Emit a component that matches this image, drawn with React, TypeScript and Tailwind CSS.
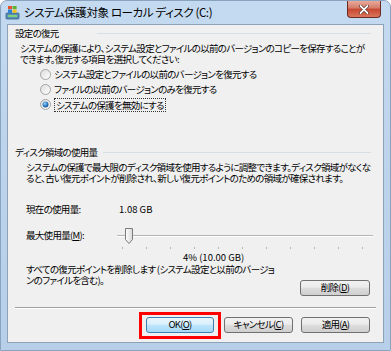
import React from "react";

const font = "font-['Noto_Sans_CJK_JP',sans-serif] [font-feature-settings:'palt']";

function WinButton({ label, wide = "w-[69px]", isDefault = false }: { label: React.ReactNode; wide?: string; isDefault?: boolean }) {
  return (
    <div
      className={`${wide} h-[16px] rounded-[3px] border flex items-center justify-center leading-none text-black ${
        isDefault
          ? "border-[#3c7fb1] bg-[linear-gradient(#eaf6fd_0%,#d9f0fc_45%,#bee6fd_50%,#a7d9f5_100%)]"
          : "border-[#707070] bg-[linear-gradient(#f2f2f2_0%,#ebebeb_45%,#dddddd_50%,#cfcfcf_100%)]"
      }`}
    >
      {label}
    </div>
  );
}

function Radio({ checked = false }: { checked?: boolean }) {
  return (
    <svg width="11" height="11" viewBox="0 0 11 11" className="shrink-0">
      <defs>
        <linearGradient id={checked ? "rg1" : "rg0"} x1="0" y1="0" x2="1" y2="1">
          <stop offset="0" stopColor="#dcdcdc" />
          <stop offset="1" stopColor="#ffffff" />
        </linearGradient>
        <radialGradient id="dot" cx="0.4" cy="0.35" r="0.7">
          <stop offset="0" stopColor="#9cd1f6" />
          <stop offset="0.6" stopColor="#2e7bc4" />
          <stop offset="1" stopColor="#1a4f8c" />
        </radialGradient>
      </defs>
      <circle cx="5.5" cy="5.5" r="5" fill={`url(#${checked ? "rg1" : "rg0"})`} stroke="#a3a3a3" strokeWidth="1" />
      {checked && <circle cx="5.5" cy="5.5" r="3" fill="url(#dot)" />}
    </svg>
  );
}

function Slider() {
  const ticks = Array.from({ length: 11 }, (_, i) => i);
  return (
    <div className="relative w-[256px] h-[24px]">
      <div className="absolute left-0 right-0 top-[10px] h-[2px] border-t border-[#b4b4b4] border-b border-b-white" />
      <svg width="10" height="16" viewBox="0 0 10 16" className="absolute left-[7px] top-[3px]">
        <defs>
          <linearGradient id="th" x1="0" y1="0" x2="1" y2="0">
            <stop offset="0" stopColor="#ffffff" />
            <stop offset="1" stopColor="#d8d8d8" />
          </linearGradient>
        </defs>
        <path d="M1.5 0.5 H8.5 V11.5 L5 15.5 L1.5 11.5 Z" fill="url(#th)" stroke="#7b7b7b" strokeLinejoin="round" />
      </svg>
      <div className="absolute left-[5px] top-[22px] flex gap-[23px]">
        {ticks.map((t) => (
          <div key={t} className="w-[1px] h-[2px] bg-[#b8b8b8]" />
        ))}
      </div>
    </div>
  );
}

export default function App() {
  return (
    <div className={`w-[391px] h-[351px] flex flex-col rounded-t-[7px] border border-[#8aa3be] bg-[linear-gradient(180deg,#c4daf0_0%,#bdd4ec_40%,#b7cfe9_100%)] ${font}`}>
      {/* title bar */}
      <div className="relative h-[23px] flex items-center pl-[4px] shrink-0">
        <svg width="15" height="15" viewBox="0 0 15 15" className="shrink-0">
          <rect x="1" y="8" width="13" height="6" rx="1" fill="#5a8fb8" stroke="#2f5f86" strokeWidth="0.8" />
          <rect x="3" y="10" width="9" height="2" fill="#7fd07a" />
          <rect x="3" y="1" width="4" height="3.2" fill="#e8502a" />
          <rect x="7.6" y="1" width="4" height="3.2" fill="#5cb230" />
          <rect x="3" y="4.6" width="4" height="3.2" fill="#2a7fd8" />
          <rect x="7.6" y="4.6" width="4" height="3.2" fill="#f5c01a" />
        </svg>
        <span className="ml-[4px] text-[11.5px] tracking-[-0.4px] text-black whitespace-nowrap">システム保護対象 ローカル ディスク (C:)</span>
        <div className="absolute right-[9px] top-0 w-[34px] h-[17px] rounded-b-[4px] border border-[#6b2a22] border-t-0 bg-[linear-gradient(#e9a99b_0%,#d47a68_45%,#c7452f_50%,#d8775c_100%)] flex items-center justify-center">
          <svg width="10" height="9" viewBox="0 0 10 9">
            <path d="M1.5 1 L8.5 8 M8.5 1 L1.5 8" stroke="#3a1a14" strokeWidth="3" strokeLinecap="round" />
            <path d="M1.5 1 L8.5 8 M8.5 1 L1.5 8" stroke="#ffffff" strokeWidth="1.8" strokeLinecap="round" />
          </svg>
        </div>
      </div>

      {/* client area */}
      <div className="flex-1 mx-[6px] mb-[7px] border border-[#8da2b8] bg-[#f0f0f0] text-[9.5px] tracking-[-0.7px] leading-[11px] text-black flex flex-col">
        {/* group 1 */}
        <div className="h-[16px] shrink-0 flex items-center pl-[7px] pr-[12px]">
          <span className="whitespace-nowrap">設定の復元</span>
          <div className="flex-1 ml-[38px] h-[1px] bg-[#d5dfe5]" />
        </div>
        <div className="pl-[12px] pt-[2px] whitespace-nowrap">
          <div className="h-[11px]">システムの保護により、システム設定とファイルの以前のバージョンのコピーを保存することが</div>
          <div className="h-[11px]">できます。復元する項目を選択してください:</div>
        </div>
        <div className="pl-[32px] mt-[1.5px] flex flex-col">
          <div className="h-[15px] flex items-center gap-[3px] whitespace-nowrap">
            <Radio />
            <span>システム設定とファイルの以前のバージョンを復元する</span>
          </div>
          <div className="h-[15px] flex items-center gap-[3px] whitespace-nowrap">
            <Radio />
            <span>ファイルの以前のバージョンのみを復元する</span>
          </div>
          <div className="h-[16px] flex items-center gap-[3px] whitespace-nowrap">
            <Radio checked />
            <span className="border border-dotted border-[#333] px-[1px] leading-[12px]">システムの保護を無効にする</span>
          </div>
        </div>

        {/* group 2 */}
        <div className="mt-[32px] h-[16px] shrink-0 flex items-center pl-[7px] pr-[12px]">
          <span className="whitespace-nowrap">ディスク領域の使用量</span>
          <div className="flex-1 ml-[6px] h-[1px] bg-[#d5dfe5]" />
        </div>
        <div className="pl-[18px] pt-[1.5px] whitespace-nowrap">
          <div className="h-[11px]">システムの保護で最大限のディスク領域を使用するように調整できます。ディスク領域がなくな</div>
          <div className="h-[11px]">ると、古い復元ポイントが削除され、新しい復元ポイントのための領域が確保されます。</div>
        </div>
        <div className="pl-[18px] mt-[19.5px] h-[12px] shrink-0 flex items-center">
          <span className="w-[93px] whitespace-nowrap">現在の使用量:</span>
          <span className="tracking-[0px]">1.08 GB</span>
        </div>
        <div className="pl-[18px] mt-[9.5px] h-[24px] shrink-0 flex items-start">
          <span className="w-[91px] mt-[5px] whitespace-nowrap">最大使用量(<u>M</u>):</span>
          <Slider />
        </div>
        <div className="pl-[175px] mt-[3px] h-[11px] whitespace-nowrap tracking-[0px]">4% (10.00 GB)</div>
        <div className="pl-[18px] pr-[13px] mt-[1px] h-[31.5px] shrink-0 flex items-start justify-between">
          <div className="whitespace-nowrap">
            <div className="h-[11px]">すべての復元ポイントを削除します (システム設定と以前のバージョ</div>
            <div className="h-[11px]">ンのファイルを含む)。</div>
          </div>
          <div className="mt-[15.5px]">
            <WinButton label={<span>削除(<u>D</u>)</span>} wide="w-[70px]" />
          </div>
        </div>
        <div className="mx-[7px] mt-[11px] h-[1px] bg-[#a0a0a0] border-b border-b-white box-content shrink-0" />
        <div className="mt-[3px] pr-[13px] flex items-center justify-end">
          <div className="border-[3px] border-[#ff0000] px-[4px] py-[2.5px] mr-[3px]">
            <WinButton label={<span>OK(<u>O</u>)</span>} wide="w-[68px]" isDefault />
          </div>
          <WinButton label={<span>キャンセル(<u>C</u>)</span>} />
          <div className="w-[8px]" />
          <WinButton label={<span>適用(<u>A</u>)</span>} />
        </div>
      </div>
    </div>
  );
}
